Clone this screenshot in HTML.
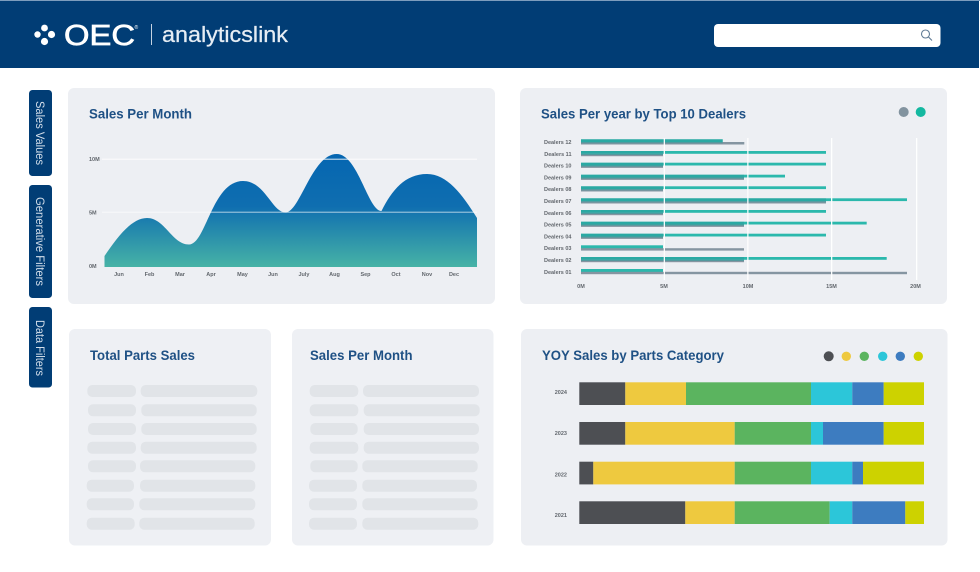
<!DOCTYPE html>
<html lang="en">
<head>
<meta charset="utf-8">
<title>OEC analyticslink</title>
<style>
html,body{margin:0;padding:0;background:#fff;width:980px;height:572px;overflow:hidden}
svg{display:block;font-family:"Liberation Sans",sans-serif;filter:blur(.3px)}
.t{font-weight:700;font-size:14px;fill:#1f5185}
.s{font-weight:700;font-size:5.5px;fill:#62676d}
</style>
</head>
<body>
<svg width="980" height="572" viewBox="0 0 980 572" xmlns="http://www.w3.org/2000/svg">
<defs>
<linearGradient id="g" gradientUnits="userSpaceOnUse" x1="0" y1="154" x2="0" y2="267">
<stop offset="0" stop-color="#0566b1"/><stop offset=".46" stop-color="#0f6eb0"/><stop offset="1" stop-color="#47b3a6"/>
</linearGradient>
</defs>
<rect width="980" height="572" fill="#fff"/>
<!-- header -->
<rect x="0" y="0" width="979" height="68" fill="#013d75"/>
<rect x="0" y="0" width="980" height="1" fill="#7d9dbd"/>
<circle cx="44.5" cy="28" r="3.4" fill="#fff"/><circle cx="37.5" cy="34.5" r="3.2" fill="#fff"/><circle cx="51.5" cy="34.5" r="3.6" fill="#fff"/><circle cx="44.5" cy="41.5" r="3.6" fill="#fff"/>
<text x="64" y="45" font-size="29" font-weight="400" fill="#fff" stroke="#fff" stroke-width=".7" textLength="71" lengthAdjust="spacingAndGlyphs">OEC</text>
<text x="134.500" y="29" font-size="5" fill="#fff">®</text>
<rect x="151" y="24" width="1" height="21" fill="#c5d3e2"/>
<text x="162" y="42" font-size="22.500" fill="#e6edf4" stroke="#e6edf4" stroke-width=".25" textLength="126" lengthAdjust="spacingAndGlyphs">analyticslink</text>
<rect x="714" y="24" width="226.500" height="23" rx="4" fill="#fff"/>
<circle cx="925.500" cy="34" r="4" fill="none" stroke="#5f7a94" stroke-width="1.100"/>
<path d="M928.500 37 L932 40.500" stroke="#5f7a94" stroke-width="1.100" fill="none"/>
<!-- side tabs -->
<rect x="29" y="90" width="23" height="86" rx="3.500" fill="#013d75"/>
<rect x="29" y="185" width="23" height="113" rx="3.500" fill="#013d75"/>
<rect x="29" y="307" width="23" height="80.500" rx="3.500" fill="#013d75"/>
<g fill="#d3deea" font-size="11.500">
<text transform="translate(36 101) rotate(90)" textLength="64" lengthAdjust="spacingAndGlyphs">Sales Values</text>
<text transform="translate(36 197) rotate(90)" textLength="89" lengthAdjust="spacingAndGlyphs">Generative Filters</text>
<text transform="translate(36 320) rotate(90)" textLength="56" lengthAdjust="spacingAndGlyphs">Data Filters</text>
</g>
<!-- cards -->
<rect x="68" y="88" width="427" height="216" rx="6" fill="#edeff3"/>
<rect x="520" y="88" width="427" height="216" rx="6" fill="#edeff3"/>
<rect x="69" y="329" width="202" height="216.500" rx="6" fill="#eef0f4"/>
<rect x="292" y="329" width="201.500" height="216.500" rx="6" fill="#eef0f4"/>
<rect x="521" y="329" width="426.500" height="216.500" rx="6" fill="#edeff3"/>
<!-- titles -->
<text class="t" x="89" y="118.500" textLength="103" lengthAdjust="spacingAndGlyphs">Sales Per Month</text>
<text class="t" x="541" y="118.500" textLength="205" lengthAdjust="spacingAndGlyphs">Sales Per year by Top 10 Dealers</text>
<text class="t" x="90" y="360" textLength="105" lengthAdjust="spacingAndGlyphs">Total Parts Sales</text>
<text class="t" x="310" y="360" textLength="102.500" lengthAdjust="spacingAndGlyphs">Sales Per Month</text>
<text class="t" x="542" y="360" textLength="182" lengthAdjust="spacingAndGlyphs">YOY Sales by Parts Category</text>
<!-- area chart -->
<path d="M104.500 267 V256 C118 236 132 218 147 218 C165 218 172 244.500 189 244.500 C206 244.500 212 181 243 181 C265 181 272 212.500 285.500 212.500 C300 212.500 312 154 336.700 154 C358 154 368 211 381.500 211 C392 190 405 174 427 174 C447 174 462 194 477 218 V267 Z" fill="url(#g)"/>
<rect x="102" y="158.700" width="375" height="1" fill="#fff" opacity=".85"/>
<rect x="102" y="211.700" width="375" height="1" fill="#fff" opacity=".65"/>
<g class="s">
<text class="s" x="89" y="161">10M</text><text class="s" x="89" y="214.500">5M</text><text class="s" x="89" y="268">0M</text>
</g>
<g text-anchor="middle">
<text class="s" x="119" y="276">Jun</text><text class="s" x="149.500" y="276">Feb</text><text class="s" x="180" y="276">Mar</text><text class="s" x="211" y="276">Apr</text><text class="s" x="242.500" y="276">May</text><text class="s" x="273" y="276">Jun</text><text class="s" x="304" y="276">July</text><text class="s" x="334.500" y="276">Aug</text><text class="s" x="365.500" y="276">Sep</text><text class="s" x="396" y="276">Oct</text><text class="s" x="427" y="276">Nov</text><text class="s" x="454" y="276">Dec</text>
</g>
<!-- legend 1 -->
<circle cx="903.700" cy="112" r="5" fill="#82939f"/><circle cx="920.700" cy="112" r="5" fill="#14b8a0"/>
<!-- bar chart -->
<g fill="#2bb8ac">
<rect x="581" y="139.300" width="141.700" height="3.500"/>
<rect x="581" y="151" width="245" height="2.800"/>
<rect x="581" y="162.700" width="245" height="2.800"/>
<rect x="581" y="174.700" width="204" height="2.800"/>
<rect x="581" y="186.300" width="245" height="2.800"/>
<rect x="581" y="198.300" width="326" height="2.800"/>
<rect x="581" y="210" width="245" height="2.800"/>
<rect x="581" y="221.700" width="285.700" height="2.800"/>
<rect x="581" y="233.700" width="245" height="2.800"/>
<rect x="581" y="245.300" width="82" height="3.200"/>
<rect x="581" y="257" width="305.700" height="2.800"/>
<rect x="581" y="269" width="82" height="3.200"/>
</g>
<g fill="#8595a1">
<rect x="581" y="142" width="163.300" height="2.500"/>
<rect x="581" y="153.800" width="82" height="2.400"/>
<rect x="581" y="165.500" width="82" height="2.400"/>
<rect x="581" y="177.500" width="163" height="2.400"/>
<rect x="581" y="189.100" width="82" height="2.400"/>
<rect x="581" y="201.100" width="245" height="2.400"/>
<rect x="581" y="212.800" width="82" height="2.400"/>
<rect x="581" y="224.500" width="163" height="2.400"/>
<rect x="581" y="236.500" width="82" height="2.400"/>
<rect x="581" y="248.200" width="163" height="2.400"/>
<rect x="581" y="259.800" width="163" height="2.400"/>
<rect x="581" y="271.800" width="326" height="2.400"/>
</g>
<g fill="#2a9d9c" opacity=".55">
<rect x="581" y="151" width="82" height="4"/><rect x="581" y="162.700" width="82" height="4"/><rect x="581" y="174.700" width="163" height="4"/><rect x="581" y="186.300" width="82" height="4"/><rect x="581" y="198.300" width="245" height="4"/><rect x="581" y="210" width="82" height="4"/><rect x="581" y="221.700" width="163" height="4"/><rect x="581" y="233.700" width="82" height="4"/><rect x="581" y="257" width="163" height="4"/><rect x="581" y="139.300" width="141.700" height="4"/>
</g>
<g fill="#fff" opacity=".95">
<rect x="663.700" y="138" width="1.300" height="142"/><rect x="747.200" y="138" width="1.300" height="142"/><rect x="831" y="138" width="1.300" height="142"/><rect x="916" y="138" width="1.300" height="142"/>
</g>
<g text-anchor="end">
<text class="s" x="571.500" y="143.800">Dealers 12</text>
<text class="s" x="571.500" y="155.800">Dealers 11</text>
<text class="s" x="571.500" y="167.300">Dealers 10</text>
<text class="s" x="571.500" y="179.500">Dealers 09</text>
<text class="s" x="571.500" y="191">Dealers 08</text>
<text class="s" x="571.500" y="203">Dealers 07</text>
<text class="s" x="571.500" y="214.800">Dealers 06</text>
<text class="s" x="571.500" y="226.500">Dealers 05</text>
<text class="s" x="571.500" y="238.500">Dealers 04</text>
<text class="s" x="571.500" y="250">Dealers 03</text>
<text class="s" x="571.500" y="261.800">Dealers 02</text>
<text class="s" x="571.500" y="273.800">Dealers 01</text>
</g>
<g text-anchor="middle">
<text class="s" x="581" y="288">0M</text><text class="s" x="664" y="288">5M</text><text class="s" x="748" y="288">10M</text><text class="s" x="831.500" y="288">15M</text><text class="s" x="915.500" y="288">20M</text>
</g>
<!-- skeletons card 3 -->
<g fill="#e1e4e8">
<rect x="87.300" y="385" width="48.700" height="12" rx="5"/><rect x="140.700" y="385" width="116.600" height="12" rx="5"/>
<rect x="88" y="404.300" width="48" height="12" rx="5"/><rect x="141.300" y="404.300" width="115.400" height="12" rx="5"/>
<rect x="88" y="423" width="48" height="12" rx="5"/><rect x="141.300" y="423" width="115.400" height="12" rx="5"/>
<rect x="87.300" y="441.700" width="48.700" height="12" rx="5"/><rect x="140.700" y="441.700" width="116" height="12" rx="5"/>
<rect x="88" y="460.300" width="48" height="12" rx="5"/><rect x="140" y="460.300" width="115.300" height="12" rx="5"/>
<rect x="86.700" y="479.700" width="47.300" height="12" rx="5"/><rect x="140" y="479.700" width="115.300" height="12" rx="5"/>
<rect x="86.700" y="498.300" width="47.300" height="12" rx="5"/><rect x="139.300" y="498.300" width="116" height="12" rx="5"/>
<rect x="86.700" y="517.700" width="48" height="12" rx="5"/><rect x="139.300" y="517.700" width="115.400" height="12" rx="5"/>
<!-- skeletons card 4 -->
<rect x="309.700" y="385" width="48.600" height="12" rx="5"/><rect x="363" y="385" width="116" height="12" rx="5"/>
<rect x="309.700" y="404.300" width="48.600" height="12" rx="5"/><rect x="363.700" y="404.300" width="116" height="12" rx="5"/>
<rect x="310.300" y="423" width="47.400" height="12" rx="5"/><rect x="363.700" y="423" width="115.300" height="12" rx="5"/>
<rect x="309.700" y="441.700" width="48.600" height="12" rx="5"/><rect x="363.700" y="441.700" width="115.300" height="12" rx="5"/>
<rect x="310.300" y="460.300" width="47.400" height="12" rx="5"/><rect x="362.300" y="460.300" width="115.400" height="12" rx="5"/>
<rect x="309" y="479.700" width="48" height="12" rx="5"/><rect x="362.300" y="479.700" width="114.700" height="12" rx="5"/>
<rect x="309" y="498.300" width="48" height="12" rx="5"/><rect x="362.300" y="498.300" width="115.400" height="12" rx="5"/>
<rect x="309" y="517.700" width="48" height="12" rx="5"/><rect x="362.300" y="517.700" width="116" height="12" rx="5"/>
</g>
<!-- legend 2 -->
<circle cx="828.700" cy="356.300" r="5" fill="#4d4f53"/>
<circle cx="846.300" cy="356.300" r="4.700" fill="#eec93f"/>
<circle cx="864.300" cy="356.300" r="4.700" fill="#5bb45f"/>
<circle cx="882.700" cy="356.300" r="4.700" fill="#2cc6d9"/>
<circle cx="900.300" cy="356.300" r="4.700" fill="#3d7cc0"/>
<circle cx="918.300" cy="356.300" r="4.700" fill="#cdd200"/>
<!-- stacked bars -->
<g>
<rect x="579.300" y="382.300" width="46" height="22.700" fill="#4d4f53"/><rect x="625.300" y="382.300" width="60.700" height="22.700" fill="#eec93f"/><rect x="686" y="382.300" width="125" height="22.700" fill="#5bb45f"/><rect x="811" y="382.300" width="41.300" height="22.700" fill="#2cc6d9"/><rect x="852.300" y="382.300" width="31.400" height="22.700" fill="#3d7cc0"/><rect x="883.700" y="382.300" width="40.300" height="22.700" fill="#cdd200"/>
<rect x="579.300" y="422" width="46" height="22.700" fill="#4d4f53"/><rect x="625.300" y="422" width="109.400" height="22.700" fill="#eec93f"/><rect x="734.700" y="422" width="76.300" height="22.700" fill="#5bb45f"/><rect x="811" y="422" width="12" height="22.700" fill="#2cc6d9"/><rect x="823" y="422" width="60.700" height="22.700" fill="#3d7cc0"/><rect x="883.700" y="422" width="40.300" height="22.700" fill="#cdd200"/>
<rect x="579.300" y="461.700" width="14" height="22.700" fill="#4d4f53"/><rect x="593.300" y="461.700" width="141.400" height="22.700" fill="#eec93f"/><rect x="734.700" y="461.700" width="76.300" height="22.700" fill="#5bb45f"/><rect x="811" y="461.700" width="41.300" height="22.700" fill="#2cc6d9"/><rect x="852.300" y="461.700" width="10.700" height="22.700" fill="#3d7cc0"/><rect x="863" y="461.700" width="61" height="22.700" fill="#cdd200"/>
<rect x="579.300" y="501.300" width="106" height="22.700" fill="#4d4f53"/><rect x="685.300" y="501.300" width="49.400" height="22.700" fill="#eec93f"/><rect x="734.700" y="501.300" width="95" height="22.700" fill="#5bb45f"/><rect x="829.700" y="501.300" width="22.600" height="22.700" fill="#2cc6d9"/><rect x="852.300" y="501.300" width="53" height="22.700" fill="#3d7cc0"/><rect x="905.300" y="501.300" width="18.700" height="22.700" fill="#cdd200"/>
</g>
<g text-anchor="end">
<text class="s" x="567" y="394">2024</text><text class="s" x="567" y="435">2023</text><text class="s" x="567" y="476.700">2022</text><text class="s" x="567" y="517">2021</text>
</g>
</svg>
</body>
</html>
